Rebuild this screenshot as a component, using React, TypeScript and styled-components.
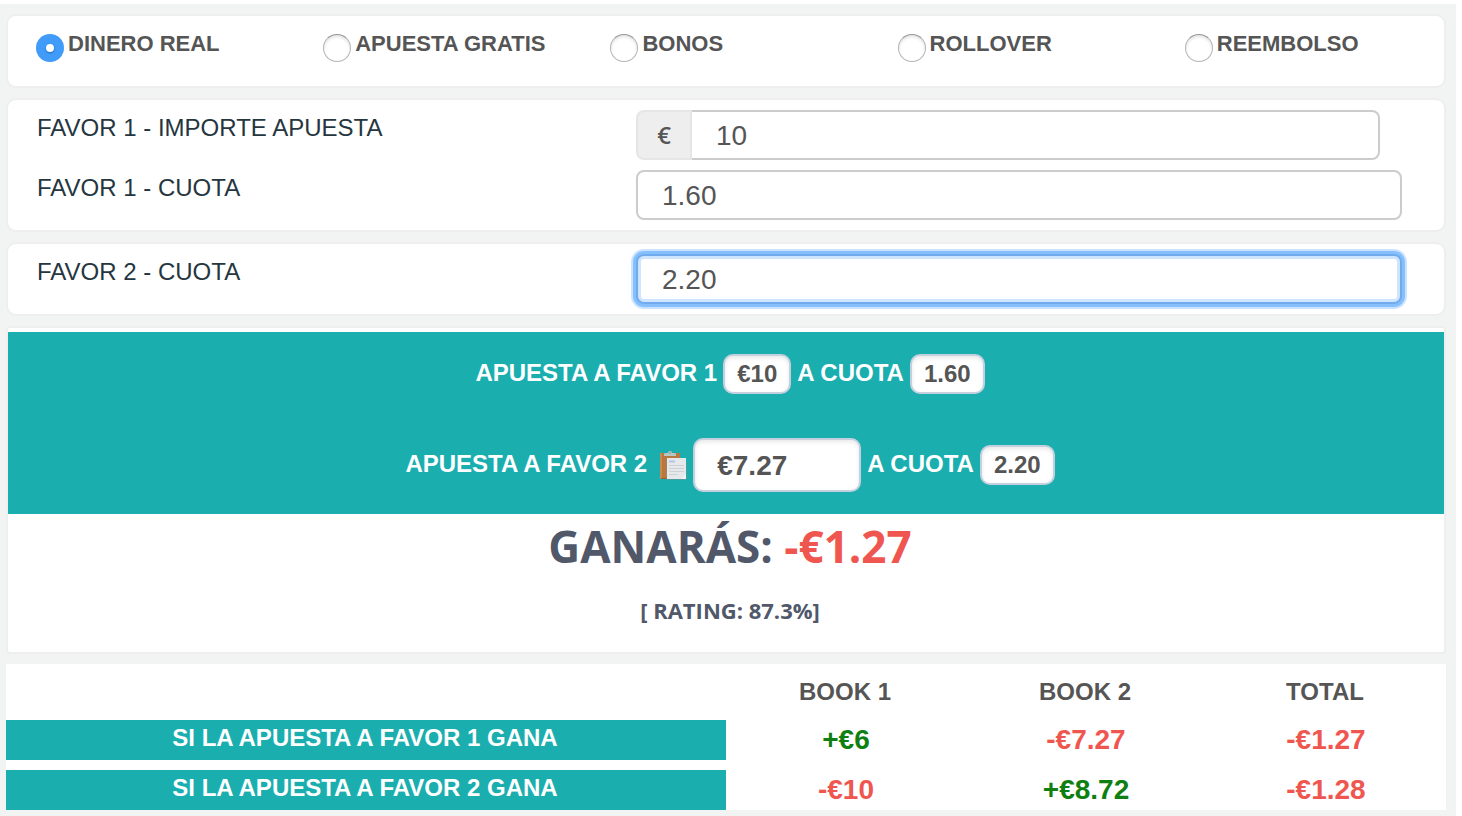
import React, { useState } from 'react';
import styled, { createGlobalStyle, css } from 'styled-components';

const GlobalStyle = createGlobalStyle`
  * { box-sizing: border-box; }
  body {
    margin: 0;
    background: #fff;
    color: #555;
    font-family: "Liberation Sans", Arial, sans-serif;
    font-size: 24px;
  }
`;

const teal = '#1baeaf';

const Page = styled.main`
  margin: 4px 6px 0 0;
  padding: 10px 10px 6px 6px;
  background: #f2f4f4;
  display: flex;
  flex-direction: column;
  gap: 10px;
`;

const Panel = styled.section`
  background: #fff;
  border: 2px solid #eee;
  border-radius: 10px;
`;

const BetTypes = styled(Panel)`
  display: grid;
  grid-template-columns: repeat(5, 1fr);
  padding: 18px 0 24px;
`;

const RadioLabel = styled.label`
  display: flex;
  align-items: flex-start;
  gap: 4px;
  padding-left: 28px;
  font-size: 22px;
  font-weight: bold;
  line-height: 20px;
  white-space: nowrap;
`;

const Radio = styled.input`
  appearance: none;
  flex: none;
  width: 28px;
  height: 28px;
  margin: 0;
  border: 1px solid #b4b4b4;
  border-top-color: #959595;
  border-radius: 50%;
  background: #fff;
  box-shadow: inset 0 2px 3px #e4e4e4;

  &:checked {
    display: grid;
    place-items: center;
    border: 0;
    background: #419bf9;
    box-shadow: none;
  }

  &:checked::before {
    content: '';
    width: 8px;
    height: 8px;
    border-radius: 50%;
    background: #fff;
    box-shadow: 0 1px 2px #2268b8;
  }
`;

const FieldPanel = styled(Panel)`
  display: flex;
  flex-direction: column;
  gap: 10px;
  padding: 10px 42px 10px 28px;
`;

const FieldRow = styled.div`
  display: grid;
  grid-template-columns: 300fr 383fr;
  align-items: start;
`;

const FieldLabel = styled.label`
  padding-left: 1px;
  color: #25363f;
  line-height: 36px;
`;

const focusRing = css`
  border-color: #71abec;
  outline: none;
  box-shadow: inset 0 0 0 3px #cde5ff, 0 0 0 3px #86bffd, 0 0 0 5px #cbe3fe;
`;

const TextInput = styled.input<{ $focused?: boolean }>`
  width: 100%;
  min-width: 0;
  height: 50px;
  padding: 2px 24px 0;
  border: 2px solid #ccc;
  border-radius: 8px;
  background: #fff;
  color: #555;
  font: 28px "Liberation Sans", Arial, sans-serif;
  ${(p) => p.$focused && focusRing}
  &:focus { ${focusRing} }
`;

const InputGroup = styled.div`
  display: flex;
  margin-right: 22px;

  ${TextInput} {
    border-left: 0;
    border-radius: 0 8px 8px 0;
  }
`;

const Addon = styled.span`
  flex: none;
  width: 56px;
  border: 2px solid #e6e6e6;
  border-radius: 8px 0 0 8px;
  background: #eee;
  font-family: "Open Sans", sans-serif;
  font-weight: 600;
  line-height: 46px;
  text-align: center;
`;

const ResultPanel = styled(Panel)`
  padding-top: 4px;
  border-radius: 4px;
`;

const Stakes = styled.div`
  display: flex;
  flex-direction: column;
  gap: 44px;
  padding: 22px 0 22px 8px;
  background: ${teal};
  color: #fff;
  font-weight: bold;
`;

const StakeLine = styled.div`
  display: flex;
  justify-content: center;
  align-items: center;
  gap: 6px;
  white-space: nowrap;
`;

const StakeText = styled.label`
  padding-bottom: 2px;
`;

const boxed = css`
  border: 2px solid #c5d0de;
  border-radius: 10px;
  background: #fff;
  box-shadow: inset 0 2px 4px #e8e8e8;
  color: #555;
`;

const Badge = styled.span`
  ${boxed}
  height: 40px;
  padding: 0 12px;
  line-height: 36px;
`;

const StakeInput = styled.input`
  ${boxed}
  width: 168px;
  height: 54px;
  padding: 2px 22px 0;
  font: bold 28px "Liberation Sans", Arial, sans-serif;
`;

const CopyButton = styled.button`
  display: flex;
  margin-left: 6px;
  padding: 0;
  border: 0;
  background: none;
  cursor: pointer;
`;

const Summary = styled.div`
  padding: 0 0 26px 8px;
  color: #50586a;
  font-family: "Open Sans", sans-serif;
  font-weight: bold;
  text-align: center;
`;

const Profit = styled.h1`
  margin: 0;
  font-size: 44px;
  line-height: 64px;
`;

const Rating = styled.p`
  margin: 16px 0 0;
  font-size: 22px;
  line-height: 32px;
`;

const Loss = styled.span`
  color: #f05650;
`;

const Outcomes = styled.table`
  width: 100%;
  table-layout: fixed;
  border-spacing: 0;
  background: #fff;
  text-align: center;

  tbody tr + tr > * { border-top: 10px solid #fff; }
`;

const ColumnHead = styled.th<{ $wide?: boolean }>`
  width: ${(p) => (p.$wide ? '50%' : 'auto')};
  padding: 0 2px 0 0;
  line-height: 56px;
`;

const OutcomeHead = styled.th`
  padding: 0 2px 4px 0;
  background: ${teal};
  background-clip: padding-box;
  color: #fff;
  line-height: 36px;
`;

const Amount = styled.td<{ $gain: boolean }>`
  padding: 0;
  color: ${(p) => (p.$gain ? '#0f7f12' : '#f05650')};
  font-size: 28px;
  font-weight: bold;
  line-height: 40px;
`;

const ClipboardIcon = () => (
  <svg width="28" height="32" viewBox="0 0 28 32" aria-hidden="true">
    <rect x="1" y="4" width="20" height="26" rx="1" fill="#b9783f" />
    <rect x="1" y="4" width="2" height="26" fill="#c98a50" />
    <rect x="2" y="29" width="18" height="1" fill="#8d643e" />
    <path d="M5 7V5q0-1 2-1h2q0-2 2-2t2 2h2q2 0 2 1v2z" fill="#b9c6c6" />
    <circle cx="11" cy="4" r="1" fill="#8fabab" />
    <path d="M7 10h17l4 3v18H7z" fill="#8a8c88" opacity=".4" />
    <path d="M8 9h19v21H8z" fill="#e6e9ec" />
    <path d="M10 12.5h6" stroke="#b4c5e0" strokeWidth="2" />
    <path d="M10 16.5h15M10 19.5h15M10 22.5h15M10 25.5h9" stroke="#cfd2d5" strokeWidth="1" />
    <path d="M22 30h5v-5z" fill="#f2f3f4" />
  </svg>
);

const betTypes = ['DINERO REAL', 'APUESTA GRATIS', 'BONOS', 'ROLLOVER', 'REEMBOLSO'];

const outcomes = [
  { label: 'SI LA APUESTA A FAVOR 1 GANA', amounts: ['+€6', '-€7.27', '-€1.27'] },
  { label: 'SI LA APUESTA A FAVOR 2 GANA', amounts: ['-€10', '+€8.72', '-€1.28'] },
];

export default function App() {
  const [betType, setBetType] = useState(betTypes[0]);

  return (
    <>
      <GlobalStyle />
      <Page>
        <BetTypes>
          {betTypes.map((type) => (
            <RadioLabel key={type}>
              <Radio
                type="radio"
                name="bet-type"
                checked={betType === type}
                onChange={() => setBetType(type)}
              />
              {type}
            </RadioLabel>
          ))}
        </BetTypes>

        <FieldPanel>
          <FieldRow>
            <FieldLabel htmlFor="stake1">FAVOR 1 - IMPORTE APUESTA</FieldLabel>
            <InputGroup>
              <Addon>€</Addon>
              <TextInput id="stake1" defaultValue="10" />
            </InputGroup>
          </FieldRow>
          <FieldRow>
            <FieldLabel htmlFor="odds1">FAVOR 1 - CUOTA</FieldLabel>
            <TextInput id="odds1" defaultValue="1.60" />
          </FieldRow>
        </FieldPanel>

        <FieldPanel>
          <FieldRow>
            <FieldLabel htmlFor="odds2">FAVOR 2 - CUOTA</FieldLabel>
            <TextInput id="odds2" defaultValue="2.20" $focused />
          </FieldRow>
        </FieldPanel>

        <ResultPanel>
          <Stakes>
            <StakeLine>
              <StakeText as="span">APUESTA A FAVOR 1</StakeText>
              <Badge>€10</Badge>
              <StakeText as="span">A CUOTA</StakeText>
              <Badge>1.60</Badge>
            </StakeLine>
            <StakeLine>
              <StakeText htmlFor="stake2">APUESTA A FAVOR 2</StakeText>
              <CopyButton type="button" aria-label="Copiar">
                <ClipboardIcon />
              </CopyButton>
              <StakeInput id="stake2" defaultValue="€7.27" />
              <StakeText as="span">A CUOTA</StakeText>
              <Badge>2.20</Badge>
            </StakeLine>
          </Stakes>
          <Summary>
            <Profit>
              GANARÁS: <Loss>-€1.27</Loss>
            </Profit>
            <Rating>[ RATING: 87.3%]</Rating>
          </Summary>
        </ResultPanel>

        <Outcomes>
          <thead>
            <tr>
              <ColumnHead $wide />
              <ColumnHead scope="col">BOOK 1</ColumnHead>
              <ColumnHead scope="col">BOOK 2</ColumnHead>
              <ColumnHead scope="col">TOTAL</ColumnHead>
            </tr>
          </thead>
          <tbody>
            {outcomes.map((row) => (
              <tr key={row.label}>
                <OutcomeHead scope="row">{row.label}</OutcomeHead>
                {row.amounts.map((amount, i) => (
                  <Amount key={i} $gain={amount.startsWith('+')}>
                    {amount}
                  </Amount>
                ))}
              </tr>
            ))}
          </tbody>
        </Outcomes>
      </Page>
    </>
  );
}
